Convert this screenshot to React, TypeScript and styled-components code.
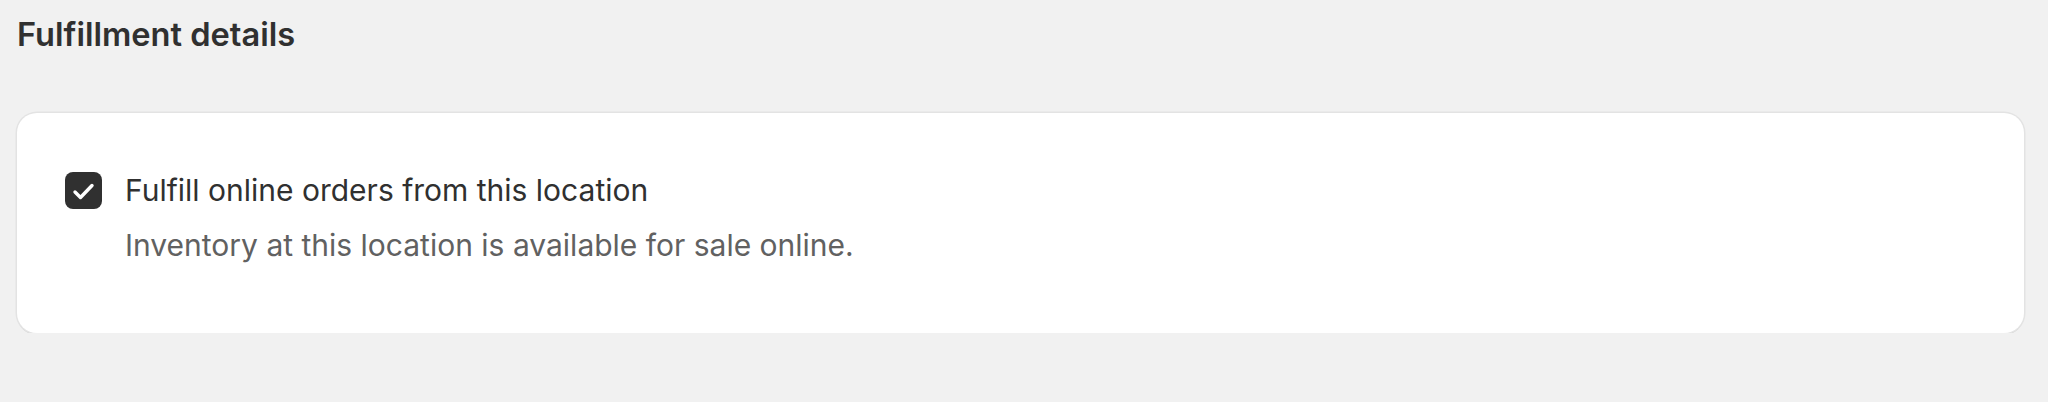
import React from "react";
import styled, { createGlobalStyle } from "styled-components";

const GlobalStyle = createGlobalStyle`
  html, body {
    margin: 0;
    padding: 0;
    background: #f1f1f1;
    font-family: Inter, "Noto Sans", sans-serif;
    color: #303030;
  }
`;

const Page = styled.div`
  padding: 14px 24px 0 17px;
`;

const Title = styled.h2`
  margin: 0;
  font-size: 32.6px;
  line-height: 40px;
  font-weight: 600;
  color: #303030;
`;

const Card = styled.section`
  margin-top: 59px;
  background: #fff;
  border-radius: 20px;
  box-shadow: 0 0 0 1.5px #e3e3e3, 0 2px 0 0 #d4d4d4;
  padding: 59px 48px 70px;
`;

const Row = styled.label`
  display: flex;
  align-items: flex-start;
  gap: 23px;
  cursor: pointer;
`;

const Box = styled.span<{ $checked: boolean }>`
  flex: none;
  width: 37px;
  height: 37px;
  border-radius: 8px;
  background: ${(p) => (p.$checked ? "#303030" : "#fff")};
  display: flex;
  align-items: center;
  justify-content: center;
`;

const Texts = styled.div`
  display: flex;
  flex-direction: column;
`;

const Label = styled.span`
  margin-top: -1px;
  font-size: 30px;
  line-height: 39px;
  color: #303030;
`;

const Help = styled.span`
  margin-top: 17px;
  font-size: 30px;
  line-height: 36px;
  color: #616161;
`;

function Check() {
  return (
    <svg width="37" height="37" viewBox="0 0 37 37" fill="none">
      <path
        d="M10 20l5.5 5.5L27 13.5"
        stroke="#fff"
        strokeWidth="3.4"
        strokeLinecap="round"
        strokeLinejoin="round"
      />
    </svg>
  );
}

export default function App() {
  const checked = true;
  return (
    <Page>
      <GlobalStyle />
      <Title>Fulfillment details</Title>
      <Card>
        <Row>
          <Box $checked={checked}>{checked && <Check />}</Box>
          <Texts>
            <Label>Fulfill online orders from this location</Label>
            <Help>Inventory at this location is available for sale online.</Help>
          </Texts>
        </Row>
      </Card>
    </Page>
  );
}
